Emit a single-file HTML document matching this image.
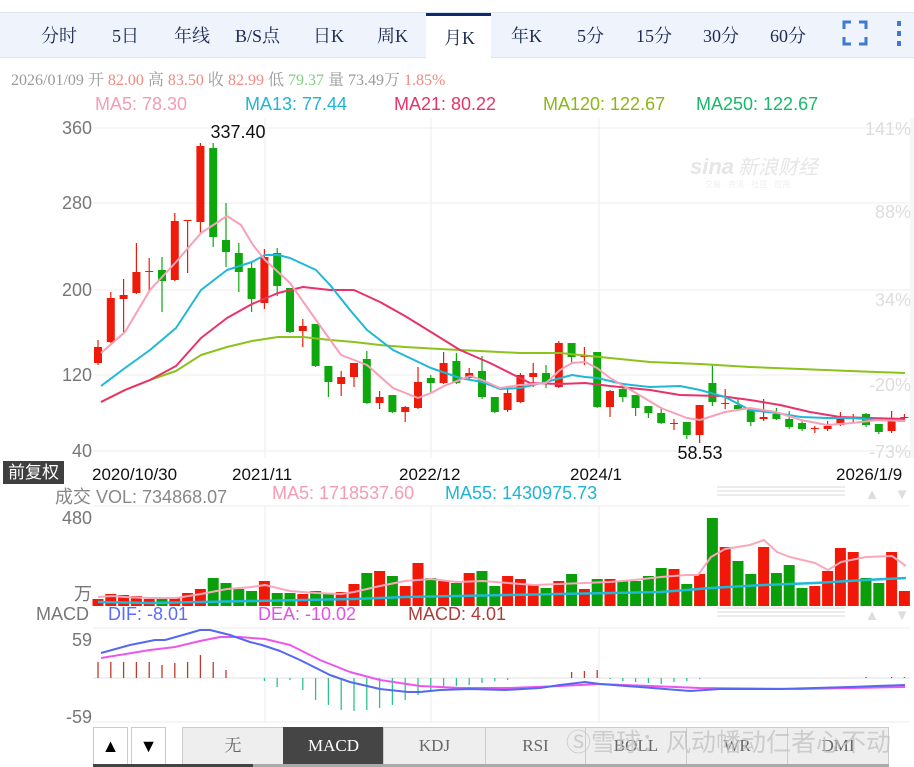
<!DOCTYPE html>
<html><head><meta charset="utf-8">
<style>
body{margin:0;width:914px;height:767px;overflow:hidden;background:#fff;font-family:"Liberation Sans","Noto Sans CJK SC",sans-serif;position:relative}
.abs{position:absolute;white-space:nowrap}
#tabs{position:absolute;left:0;top:12px;width:914px;height:44px;background:#eef3fc;border-top:1px solid #dde5f2;border-bottom:1px solid #dde5f2}
.tab{position:absolute;top:9px;font-family:"Liberation Serif","Noto Serif CJK SC",serif;font-size:18px;color:#1c2a52}
#act{position:absolute;left:426px;top:0;width:65px;height:45px;background:#fff;border-top:3px solid #0f2a6e;box-sizing:border-box}
.info{font-family:"Liberation Serif","Noto Serif CJK SC",serif;font-size:16px;color:#9a9a9a}
.btn{position:absolute;top:727px;height:38px;border:1px solid #ccc;box-sizing:border-box;background:#eeeeee;color:#666;font-family:"Liberation Serif","Noto Serif CJK SC",serif;font-size:17px;text-align:center;line-height:36px}
</style></head><body>
<div id="tabs">
<div id="act"></div>
<span class="tab" style="left:41px">分时</span>
<span class="tab" style="left:112px">5日</span>
<span class="tab" style="left:174px">年线</span>
<span class="tab" style="left:235px">B/S点</span>
<span class="tab" style="left:313px">日K</span>
<span class="tab" style="left:377px">周K</span>
<span class="tab" style="left:444px;top:11px">月K</span>
<span class="tab" style="left:511px">年K</span>
<span class="tab" style="left:577px">5分</span>
<span class="tab" style="left:636px">15分</span>
<span class="tab" style="left:703px">30分</span>
<span class="tab" style="left:770px">60分</span>
<svg class="abs" style="left:840px;top:4px" width="30" height="32"><path d="M4 12V5h7M19 5h7v7M26 20v7h-7M11 27H4v-7" fill="none" stroke="#3f78cc" stroke-width="3"/></svg>
<svg class="abs" style="left:893px;top:4px" width="12" height="32"><rect x="4" y="4" width="4" height="5" fill="#3f78cc"/><rect x="4" y="14" width="4" height="5" fill="#3f78cc"/><rect x="4" y="24" width="4" height="5" fill="#3f78cc"/></svg>
</div>
<div class="abs info" style="left:11px;top:67px">2026/01/09 开 <span style="color:#f08a80">82.00</span> 高 <span style="color:#f08a80">83.50</span> 收 <span style="color:#f08a80">82.99</span> 低 <span style="color:#7fcf7f">79.37</span> 量 73.49万 <span style="color:#f08a80">1.85%</span></div>
<div class="abs" style="left:95px;top:94px;font-size:18px;color:#f59cb3">MA5: 78.30</div>
<div class="abs" style="left:245px;top:94px;font-size:18px;color:#1fb5d5">MA13: 77.44</div>
<div class="abs" style="left:394px;top:94px;font-size:18px;color:#e8336a">MA21: 80.22</div>
<div class="abs" style="left:543px;top:94px;font-size:18px;color:#8cb614">MA120: 122.67</div>
<div class="abs" style="left:696px;top:94px;font-size:18px;color:#19b86a">MA250: 122.67</div>

<svg id="ch" class="abs" style="left:0;top:0" width="914" height="767"></svg>

<div class="abs" style="left:3px;top:461px;width:61px;height:23px;background:#3f3f3f;color:#fff;font-size:17px;line-height:23px;text-align:center">前复权</div>
<div class="abs" style="left:92px;top:465px;font-size:17px;color:#111">2020/10/30</div>
<div class="abs" style="left:232px;top:465px;font-size:17px;color:#111">2021/11</div>
<div class="abs" style="left:399px;top:465px;font-size:17px;color:#111">2022/12</div>
<div class="abs" style="left:570px;top:465px;font-size:17px;color:#111">2024/1</div>
<div class="abs" style="left:836px;top:465px;font-size:17px;color:#111">2026/1/9</div>
<div class="abs" style="left:55px;top:483px;font-size:18px;color:#888">成交 <span>VOL: 734868.07</span></div>
<div class="abs" style="left:272px;top:483px;font-size:18px;color:#f59cb3">MA5: 1718537.60</div>
<div class="abs" style="left:445px;top:483px;font-size:18px;color:#1fb5d5">MA55: 1430975.73</div>
<div class="abs" style="left:36px;top:604px;font-size:18px;color:#777">MACD</div>
<div class="abs" style="left:108px;top:604px;font-size:18px;color:#5a6cf5">DIF: -8.01</div>
<div class="abs" style="left:258px;top:604px;font-size:18px;color:#e350e8">DEA: -10.02</div>
<div class="abs" style="left:408px;top:604px;font-size:18px;color:#b03a3a">MACD: 4.01</div>

<div class="btn" style="left:93px;width:35px;background:#fff;color:#000;font-size:18px">▲</div>
<div class="btn" style="left:131px;width:35px;background:#fff;color:#000;font-size:18px">▼</div>
<div class="btn" style="left:182px;width:102px">无</div>
<div class="btn" style="left:283px;width:101px;background:#454545;color:#fff;border-color:#454545">MACD</div>
<div class="btn" style="left:383px;width:103px">KDJ</div>
<div class="btn" style="left:485px;width:101px">RSI</div>
<div class="btn" style="left:585px;width:102px">BOLL</div>
<div class="btn" style="left:686px;width:102px">WR</div>
<div class="btn" style="left:787px;width:102px">DMI</div>
<div class="abs" style="left:93px;top:764px;width:160px;height:3px;background:#444"></div>
<div class="abs" style="left:253px;top:764px;width:636px;height:3px;background:#aaa"></div>
<div class="abs" style="left:566px;top:723px;font-size:25px;color:rgba(195,195,195,0.8)">Ⓢ雪球：风动幡动仁者心不动</div>

<script>
var s=document.getElementById('ch'),h='';
function L(x1,y1,x2,y2,c,w){h+='<line x1="'+x1+'" y1="'+y1+'" x2="'+x2+'" y2="'+y2+'" stroke="'+c+'" stroke-width="'+(w||1)+'"/>';}
function R(x,y,w,hh,c){h+='<rect x="'+x+'" y="'+y+'" width="'+w+'" height="'+Math.max(hh,1)+'" fill="'+c+'"/>';}
function T(x,y,t,c,sz,a,ex){h+='<text x="'+x+'" y="'+y+'" fill="'+c+'" font-size="'+sz+'" text-anchor="'+(a||'start')+'" font-family="Liberation Sans,Noto Sans CJK SC,sans-serif" '+(ex||'')+'>'+t+'</text>';}
function P(pts,c,w){h+='<polyline points="'+pts+'" fill="none" stroke="'+c+'" stroke-width="'+w+'" stroke-linejoin="round"/>';}
var G='#eeeeee';
[128,203,290,375,451].forEach(function(y){L(93,y,910,y,G)});
L(93,506,910,506,G);L(93,628,910,628,G);L(93,722,910,722,G);
[265,431,599].forEach(function(x){L(x,118,x,458,G);L(x,506,x,606,G);L(x,628,x,722,G)});
L(93,678,910,678,'#e0e0e0');
R(910,118,4,340,'#f6f6f6');
T(92,134,'360','#777',18,'end');T(92,209,'280','#777',18,'end');T(92,296,'200','#777',18,'end');T(92,381,'120','#777',18,'end');T(92,457,'40','#777',18,'end');
T(911,135,'141%','#ddd',18,'end');T(911,218,'88%','#ddd',18,'end');T(911,306,'34%','#ddd',18,'end');T(911,391,'-20%','#ddd',18,'end');T(911,458,'-73%','#ddd',18,'end');
T(92,524,'480','#777',18,'end');T(92,600,'万','#777',18,'end');
T(92,646,'59','#777',18,'end');T(92,723,'-59','#777',18,'end');
T(690,174,'sina','#e6e6e6',22,'start','font-weight="bold" font-style="italic"');T(738,174,'新浪财经','#e6e6e6',20,'start','font-style="italic"');T(705,187,'交易 · 资讯 · 社区 · 应用','#eeeeee',8);
var C=[[363,347,340,365],[342,298,292,343],[299,295,279,332],[293,272,243,294],[271,271,258,291],[270,281,257,312],[280,221,213,281],[220,220,220,273],[222,146,143,233],[148,237,143,247],[240,252,203,267],[253,272,243,292],[268,299,263,312],[303,257,249,309],[253,286,248,296],[288,332,288,333],[331,326,319,347],[324,366,324,367],[366,382,366,397],[384,377,371,396],[377,363,363,387],[359,403,351,404],[403,397,391,409],[395,412,395,413],[412,407,406,422],[408,382,367,409],[378,383,375,393],[383,363,352,384],[361,383,353,384],[378,373,368,380],[371,397,356,399],[397,412,397,413],[410,393,388,412],[402,375,373,403],[377,373,363,387],[373,382,365,388],[387,343,341,388],[343,357,343,363],[356,356,347,365],[352,407,352,408],[407,391,390,417],[389,397,383,402],[395,408,395,416],[406,413,406,418],[413,423,407,424],[423,423,419,430],[422,435,422,439],[435,405,405,443],[383,402,365,406],[403,403,389,409],[405,409,399,410],[410,422,410,426],[419,417,399,421],[414,419,408,420],[419,427,411,429],[423,429,421,431],[429,428,426,433],[429,426,421,431],[425,417,412,426],[418,418,414,422],[414,425,413,427],[424,432,424,434],[431,418,411,433],[418,417,414,419]];
var vol=[599,594,595,596,599,597,597,593,589,578,583,589,591,581,593,593,594,591,593,592,584,573,571,576,586,563,578,581,583,573,571,586,576,579,584,588,581,574,589,579,579,581,581,576,568,569,584,574,518,547,561,574,547,573,565,588,586,571,548,552,578,583,552,591];
var mh=[662,662,662,662,662,665,663,662,655,662,670,678,678,681,687,680,690,700,705,710,711,710,708,705,700,695,690,688,686,685,683,681,680,678,678,678,678,672,671,670,679,681,682,683,684,682,681,679,678,678,678,678,678,678,678,678,678,678,678,678,677,678,677,677];
for(var i=0;i<64;i++){
 var x=98+i*12.8,c=C[i],up=c[1]<=c[0],col=up?'#ee1a0a':'#0ea80e';
 L(x,c[2],x,c[3],col,1.2);
 R(x-4,Math.min(c[0],c[1]),8,Math.abs(c[0]-c[1]),col);
 var vc=up?'#f21808':'#0a9e0a';
 R(x-5.5,vol[i],11,606-vol[i],vc);
 var m=mh[i];
 if(m<678)L(x,m,x,678,'#c0392b',1.3); else if(m>678)L(x,678,x,m,'#2dc28a',1.3);
}
P('101,402 125,390 150,380 176,371 201,355 227,347 252,341 278,337 303,337 330,340 354,342 380,345 405,347 440,349 480,351 520,353 560,353 600,357 650,362 700,364 750,367 800,369 850,371 905,373','#8cc21e',2);
P('101,402 125,390 150,380 176,366 201,338 227,318 252,304 278,293 303,287 330,290 354,290 380,302 405,316 431,332 460,350 490,363 510,373 530,383 560,384 585,383 610,386 650,390 680,395 720,396 750,400 780,405 810,412 840,417 870,418 905,419','#e8336a',2);
P('101,386 125,368 150,350 176,328 201,290 227,270 252,262 265,255 278,255 290,258 316,270 330,285 350,310 367,330 393,350 431,368 460,378 482,382 500,389 520,388 546,382 572,375 585,377 597,378 623,384 650,387 680,386 700,390 725,397 750,410 776,413 801,417 827,418 852,418 878,420 905,421','#1fb8d8',2);
P('101,353 125,332 150,290 176,262 201,233 227,216 241,225 253,245 265,260 290,283 316,320 341,355 367,365 393,388 418,398 431,393 444,386 470,376 482,380 500,388 520,385 546,383 560,370 572,363 585,362 597,368 610,378 636,393 661,408 687,418 700,420 725,412 750,408 776,412 801,420 827,425 852,423 878,420 905,421','#f7a0b8',2);
T(238,138,'337.40','#111',18,'middle');T(700,459,'58.53','#111',18,'middle');
P('98,597 112,596 125,597 150,598 176,598 201,594 227,589 252,587 265,585 290,591 316,593 341,594 354,592 380,586 405,581 431,579 457,582 483,581 508,583 534,585 559,584 584,583 609,582 634,580 661,577 686,575 698,575 711,557 725,549 750,545 764,540 777,552 790,557 815,563 828,570 841,562 866,557 892,556 906,566','#f9a8bc',2);
P('98,602 150,603 201,602 252,601 303,600 354,599 405,597 457,596 508,595 559,594 610,593 661,592 711,588 764,585 815,583 866,580 906,578','#1fb8d8',2.5);
P('101,658 150,650 175,647 200,641 220,637 240,637 265,639 290,645 320,660 350,672 380,680 420,686 460,688 510,688 560,686 600,684 700,688 800,689 905,687','#ee55ee',2);
P('101,653 130,645 155,640 165,640 190,633 200,630 210,630 230,635 250,642 262,645 280,651 300,660 330,675 350,682 380,689 408,692 420,692 440,690 470,689 505,690 540,688 560,685 585,682 600,684 640,687 690,691 720,689 780,689 850,687 905,685','#5568f0',2);
for(var k=0;k<2;k++){var yy=[487,608][k];for(var j=0;j<3;j++)L(717,yy+j*4,845,yy+j*4,'#e6e6e6',1.5);T(872,yy+12,'▲','#ddd',15,'middle');T(902,yy+12,'▼','#ddd',15,'middle');}
s.innerHTML=h;
</script>
</body></html>
